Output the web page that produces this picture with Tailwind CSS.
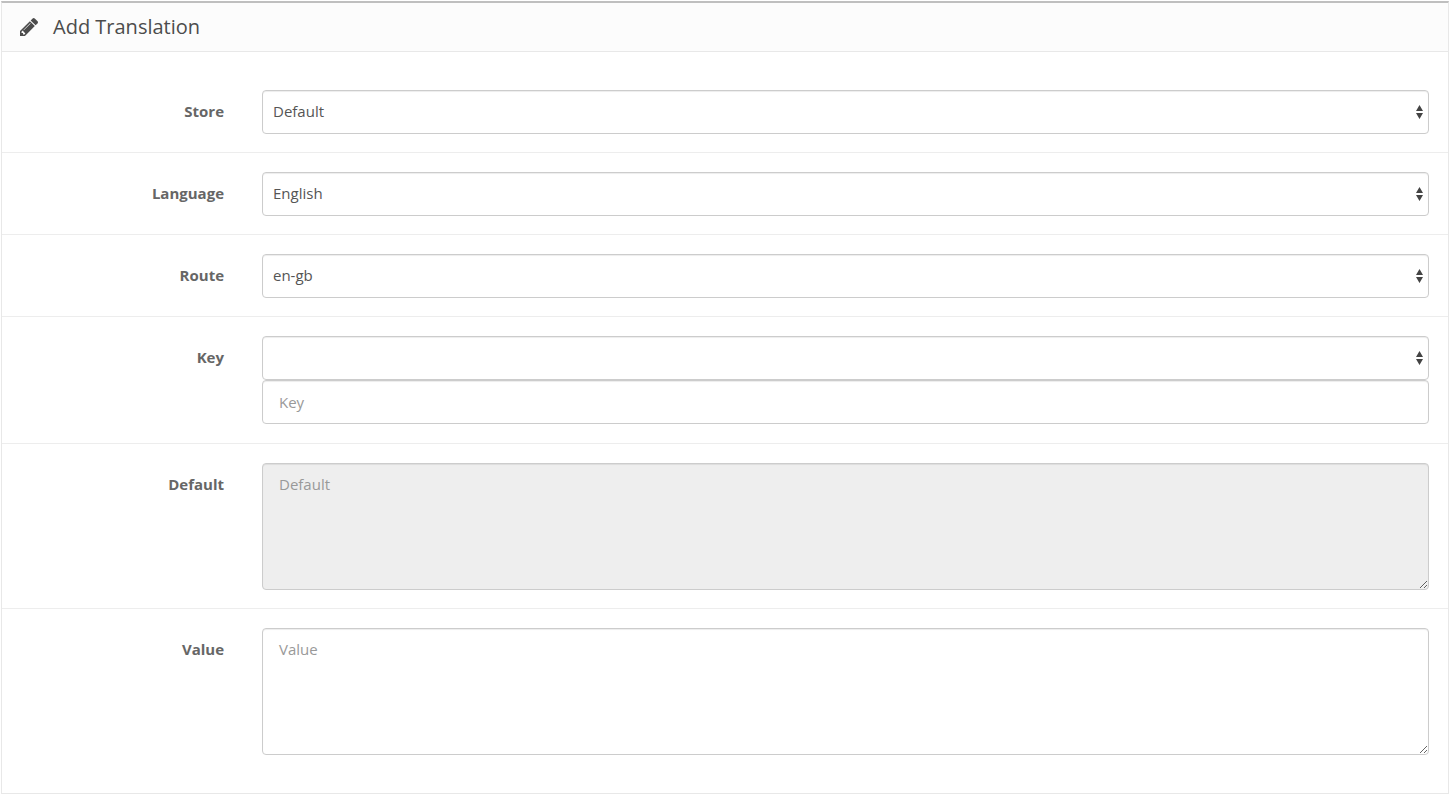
<!DOCTYPE html>
<html lang="en">
<head>
    <meta charset="UTF-8">
    <meta name="viewport" content="width=device-width, initial-scale=1.0">
    <title>Add Translation</title>
    <script src="https://cdn.jsdelivr.net/npm/@tailwindcss/browser@4"></script>
</head>
<body class="bg-white p-px font-['Open_Sans',sans-serif] text-[15px] text-[#666]">
    <div class="border border-t-2 border-[#e8e8e8] border-t-[#bfbfbf]">
        <div class="flex h-[49px] items-center gap-[15px] border-b border-[#e8e8e8] bg-[#fcfcfc] px-[18px] text-[#4c4c4c]">
            <svg class="size-[18px]" viewBox="128 149 1515 1515" fill="currentColor" aria-hidden="true">
                <path d="M491 1536l91-91-235-235-91 91v107h128v128h107zM1014 608q0-22-22-22-10 0-17 7l-542 542q-7 7-7 17 0 22 22 22 10 0 17-7l542-542q7-7 7-17zM960 416l416 416-832 832H128v-416zM1643 512q0 53-37 90l-166 166-416-416 166-165q36-38 90-38 53 0 91 38l235 234q37 39 37 91z"/>
            </svg>
            <h3 class="text-[20px]">Add Translation</h3>
        </div>
        <form class="divide-y divide-[#ededed] pt-[19px] pb-5">
            <!-- Store -->
            <div class="flex pt-[19px] pb-[18px]">
                <label for="store" class="w-1/6 px-[19px] pt-[11px] text-right leading-5 font-bold">Store</label>
                <div class="w-5/6 px-[19px]">
                    <div class="relative">
                        <select id="store" class="block h-11 w-full appearance-none rounded border border-[#ccc] bg-white px-2.5 pb-0.5 text-[#555] shadow-[inset_0_1px_1px_rgba(0,0,0,0.075)]">
                            <option>Default</option>
                        </select>
                        <svg class="pointer-events-none absolute top-[15px] right-[6px] h-[14px] w-[7px] text-[#444]" viewBox="0 0 7 14" fill="currentColor" aria-hidden="true"><path d="M3.5 0L7 6H0zM3.5 14L7 8H0z"/></svg>
                    </div>
                </div>
            </div>
            <!-- Language -->
            <div class="flex pt-[19px] pb-[18px]">
                <label for="language" class="w-1/6 px-[19px] pt-[11px] text-right leading-5 font-bold">Language</label>
                <div class="w-5/6 px-[19px]">
                    <div class="relative">
                        <select id="language" class="block h-11 w-full appearance-none rounded border border-[#ccc] bg-white px-2.5 pb-0.5 text-[#555] shadow-[inset_0_1px_1px_rgba(0,0,0,0.075)]">
                            <option>English</option>
                        </select>
                        <svg class="pointer-events-none absolute top-[15px] right-[6px] h-[14px] w-[7px] text-[#444]" viewBox="0 0 7 14" fill="currentColor" aria-hidden="true"><path d="M3.5 0L7 6H0zM3.5 14L7 8H0z"/></svg>
                    </div>
                </div>
            </div>
            <!-- Route -->
            <div class="flex pt-[19px] pb-[18px]">
                <label for="route" class="w-1/6 px-[19px] pt-[11px] text-right leading-5 font-bold">Route</label>
                <div class="w-5/6 px-[19px]">
                    <div class="relative">
                        <select id="route" class="block h-11 w-full appearance-none rounded border border-[#ccc] bg-white px-2.5 pb-0.5 text-[#555] shadow-[inset_0_1px_1px_rgba(0,0,0,0.075)]">
                            <option>en-gb</option>
                        </select>
                        <svg class="pointer-events-none absolute top-[15px] right-[6px] h-[14px] w-[7px] text-[#444]" viewBox="0 0 7 14" fill="currentColor" aria-hidden="true"><path d="M3.5 0L7 6H0zM3.5 14L7 8H0z"/></svg>
                    </div>
                </div>
            </div>
            <!-- Key -->
            <div class="flex py-[19px]">
                <label for="key" class="w-1/6 px-[19px] pt-[11px] text-right leading-5 font-bold">Key</label>
                <div class="w-5/6 px-[19px]">
                    <div class="relative">
                        <select id="keys" aria-label="Existing keys" class="block h-11 w-full appearance-none rounded border border-[#ccc] bg-white px-2.5 pb-0.5 text-[#555] shadow-[inset_0_1px_1px_rgba(0,0,0,0.075)]">
                            <option></option>
                        </select>
                        <svg class="pointer-events-none absolute top-[15px] right-[6px] h-[14px] w-[7px] text-[#444]" viewBox="0 0 7 14" fill="currentColor" aria-hidden="true"><path d="M3.5 0L7 6H0zM3.5 14L7 8H0z"/></svg>
                    </div>
                    <input type="text" id="key" placeholder="Key" class="block h-11 w-full rounded border border-[#ccc] bg-white px-4 text-[#555] shadow-[inset_0_1px_1px_rgba(0,0,0,0.075)] placeholder:text-[#999]">
                </div>
            </div>
            <!-- Default -->
            <div class="flex pt-[19px] pb-[18px]">
                <label for="default" class="w-1/6 px-[19px] pt-[11px] text-right leading-5 font-bold">Default</label>
                <div class="w-5/6 px-[19px]">
                    <textarea id="default" placeholder="Default" disabled class="block h-[127px] w-full rounded border border-[#ccc] bg-[#eee] px-4 py-2.5 leading-5 text-[#555] shadow-[inset_0_1px_1px_rgba(0,0,0,0.075)] placeholder:text-[#999]"></textarea>
                </div>
            </div>
            <!-- Value -->
            <div class="flex pt-[19px] pb-[18px]">
                <label for="value" class="w-1/6 px-[19px] pt-[11px] text-right leading-5 font-bold">Value</label>
                <div class="w-5/6 px-[19px]">
                    <textarea id="value" placeholder="Value" class="block h-[127px] w-full rounded border border-[#ccc] bg-white px-4 py-2.5 leading-5 text-[#555] shadow-[inset_0_1px_1px_rgba(0,0,0,0.075)] placeholder:text-[#999]"></textarea>
                </div>
            </div>
        </form>
    </div>
</body>
</html>
